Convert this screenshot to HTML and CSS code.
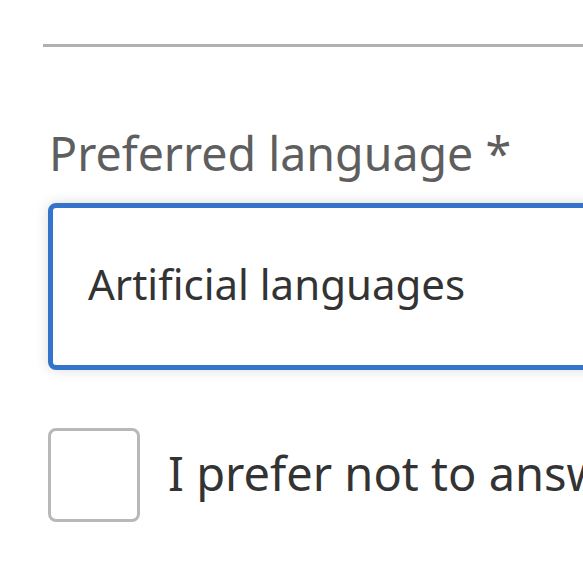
FILE: index.html
```html
<!DOCTYPE html>
<html lang="en">
<head>
<meta charset="utf-8">
<title>Preferred language</title>
<link rel="stylesheet" href="styles.css">
</head>
<body>
<div class="page">
  <div class="rule"></div>
  <label class="field-label" for="lang">Preferred language *</label>
  <div class="select-box" id="lang">
    <span class="select-value">Artificial languages</span>
  </div>
  <div class="check-row">
    <span class="checkbox"></span>
    <span class="check-label">I prefer not to answer</span>
  </div>
</div>
</body>
</html>
```
FILE: styles.css
```css
html, body {
  margin: 0;
  padding: 0;
  background: #ffffff;
  overflow: hidden;
}
.page {
  width: 583px;
  height: 586px;
  overflow: hidden;
  font-family: "Noto Sans", Lato, sans-serif;
  font-variant-ligatures: none;
}
.rule {
  margin: 44px 0 0 43px;
  height: 3px;
  width: 700px;
  background: #b1b1b1;
}
.field-label {
  display: block;
  margin: 83px 0 0 49px;
  font-size: 46.5px;
  line-height: 47px;
  color: #5e5e5e;
  white-space: nowrap;
}
.select-box {
  margin: 26px 0 0 48px;
  width: 700px;
  height: 157px;
  border: 5px solid #3474cb;
  border-radius: 8px;
  box-shadow: 0 0 14px rgba(0, 0, 0, 0.14);
  box-sizing: content-box;
  background: #fff;
  padding: 0 0 0 35px;
}
.select-value {
  display: block;
  padding-top: 55px;
  font-size: 42px;
  line-height: 42px;
  color: #333333;
  white-space: nowrap;
}
.check-row {
  display: flex;
  align-items: flex-start;
  gap: 28px;
  margin: 58px 0 0 48px;
  white-space: nowrap;
}
.checkbox {
  flex: none;
  width: 86px;
  height: 88px;
  border: 3px solid #b8b8b8;
  border-radius: 8px;
  background: #fff;
}
.check-label {
  margin-top: 22px;
  font-size: 47px;
  line-height: 47px;
  color: #333333;
}
```
